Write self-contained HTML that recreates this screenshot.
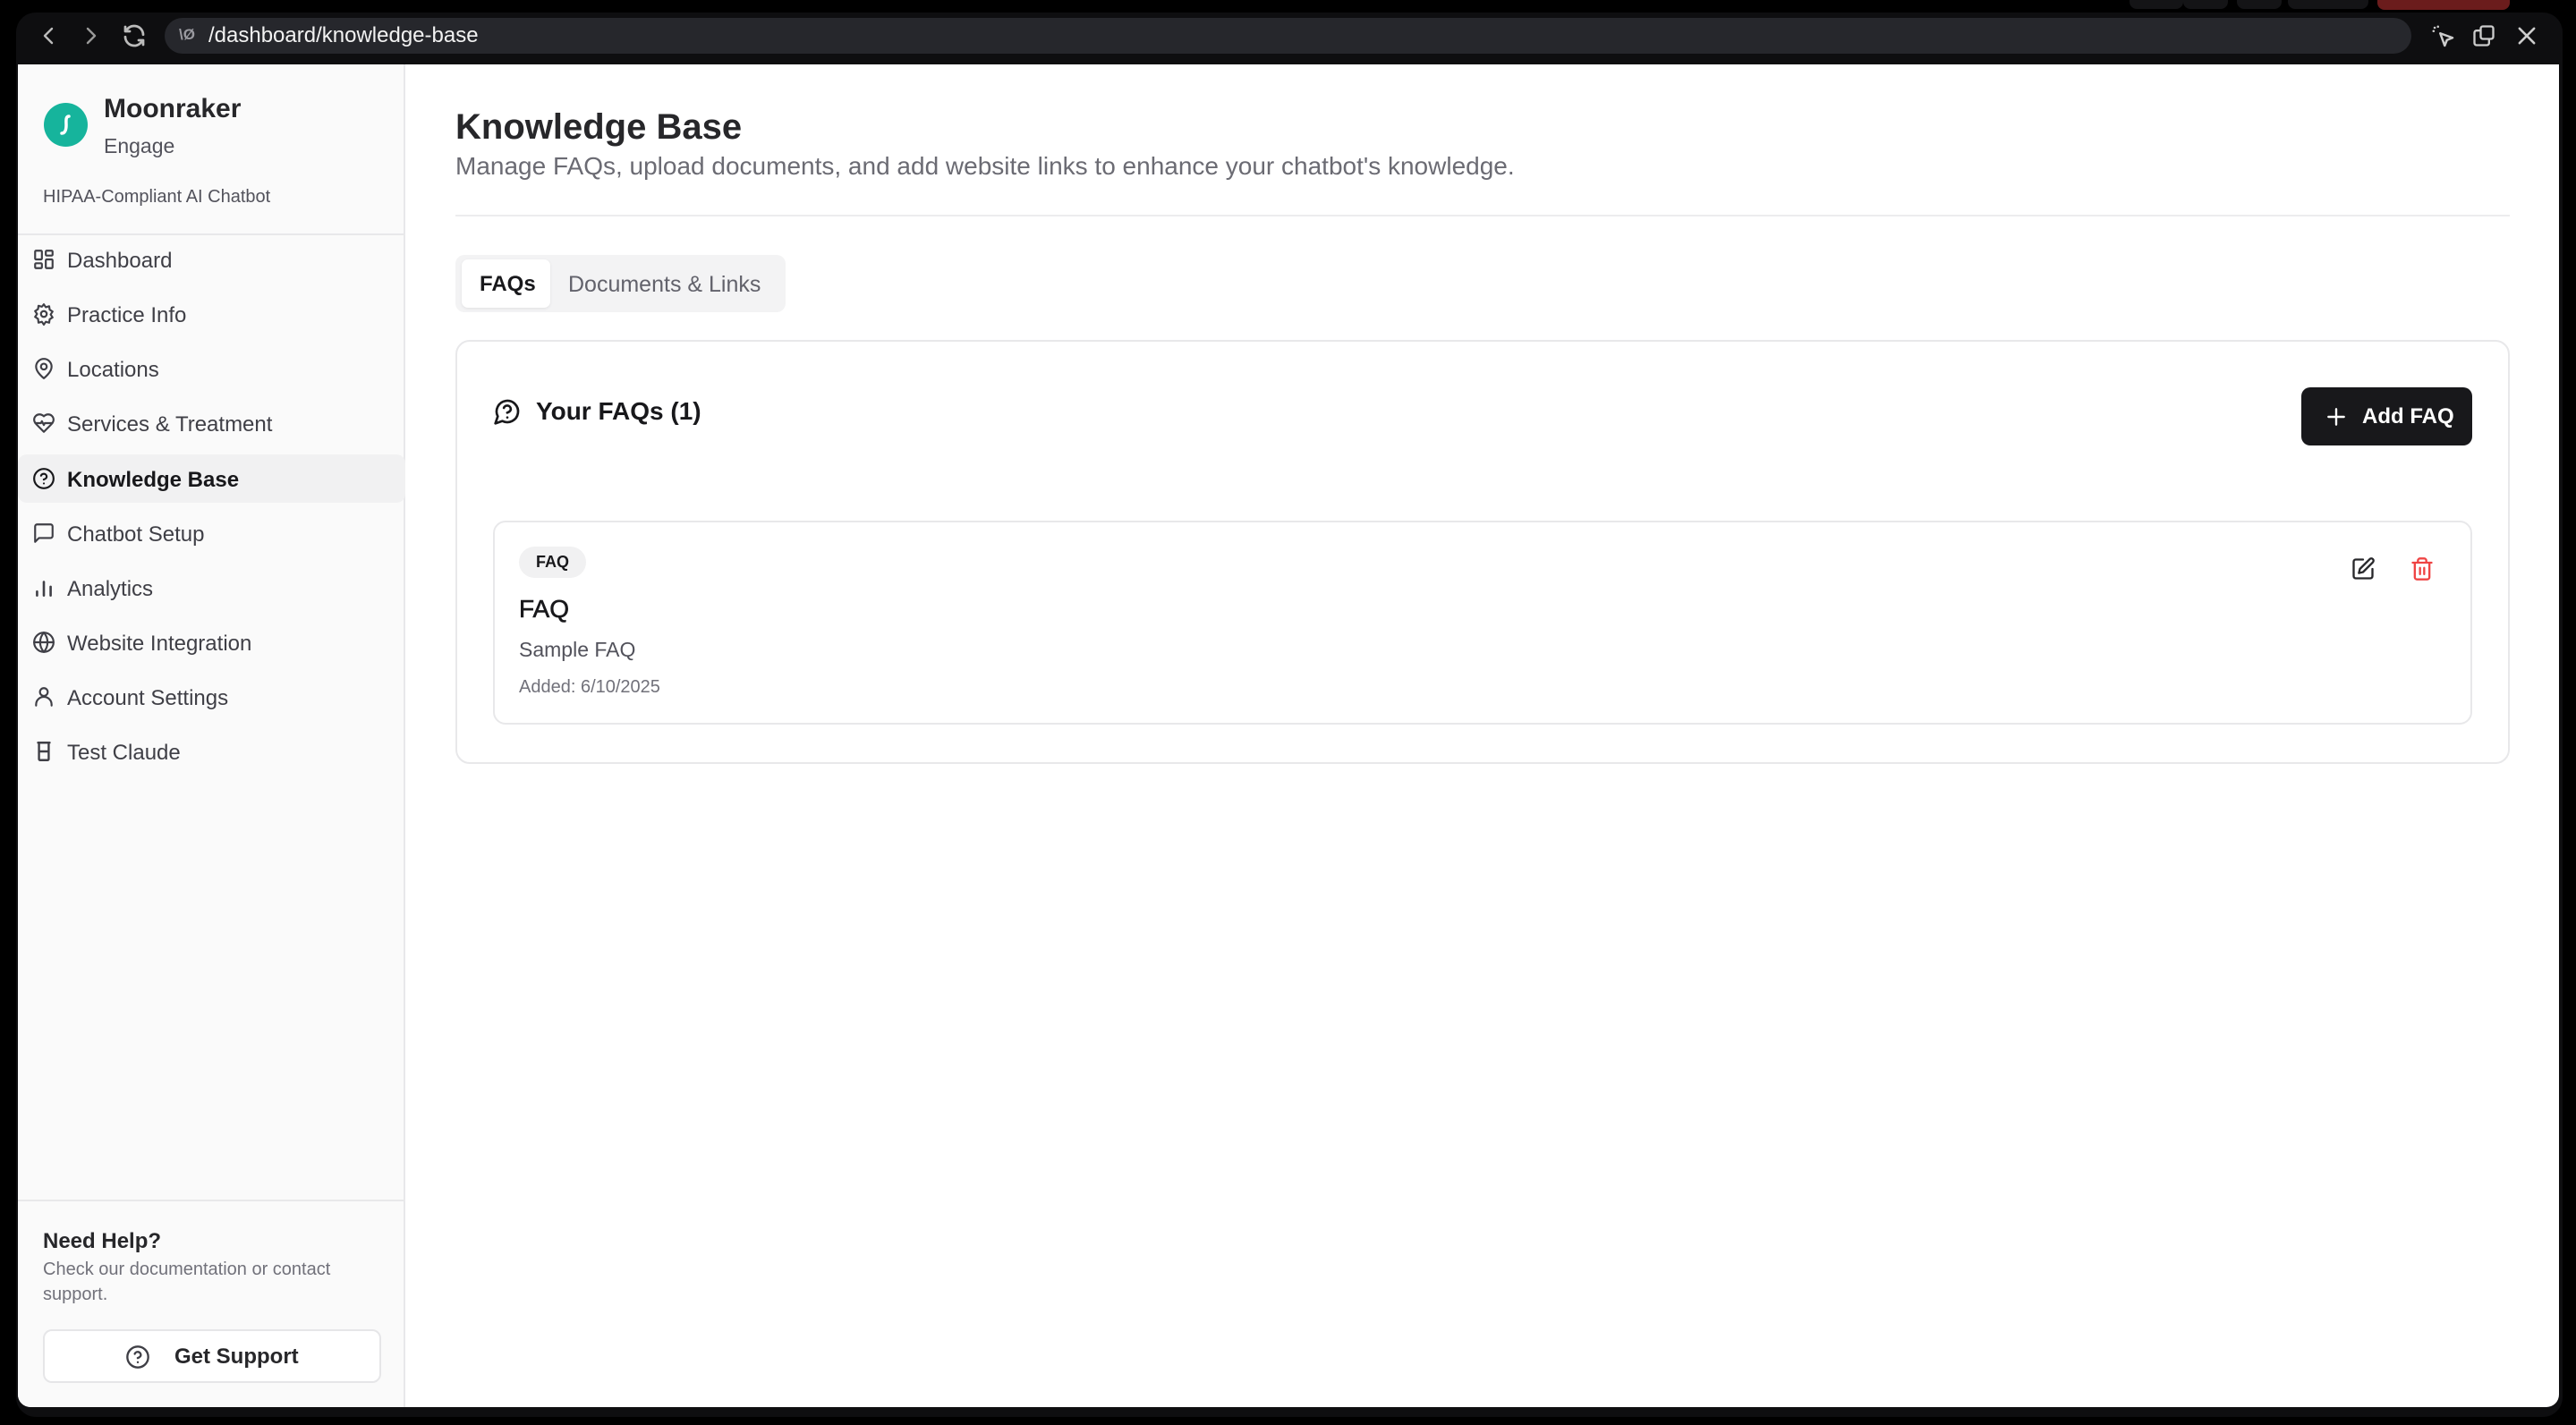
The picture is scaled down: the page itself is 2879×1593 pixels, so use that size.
<!DOCTYPE html>
<html><head><meta charset="utf-8"><style>
*{box-sizing:border-box;margin:0;padding:0}
body{width:2879px;height:1593px;background:#000;font-family:"Liberation Sans",sans-serif;position:relative;overflow:hidden}
.a{position:absolute;white-space:nowrap}
.win{position:absolute;left:18px;top:14px;width:2846px;height:1570px;background:#0e0e10;border-radius:22px}
.url{position:absolute;left:184px;top:20px;width:2511px;height:40px;background:#26272c;border-radius:20px}
.content{position:absolute;left:20px;top:72px;width:2840px;height:1501px;background:#fff;border-radius:0 0 14px 14px;overflow:hidden}
.side{position:absolute;left:0;top:0;width:433px;height:1501px;background:#fafafa;border-right:2px solid #e8e8ea}
.nav{position:absolute;left:0;width:433px;height:54px;display:flex;align-items:center;font-size:24px;color:#3f3f46}
.nav svg{position:absolute;left:16px;width:26px;height:26px}
.nav span{position:absolute;left:55px;top:15px}
svg{fill:none;stroke-linecap:round;stroke-linejoin:round}
</style></head><body>
<div class="a" style="left:2380px;top:0;width:60px;height:10px;background:#141416;border-radius:0 0 8px 8px"></div>
<div class="a" style="left:2440px;top:0;width:50px;height:10px;background:#141416;border-radius:0 0 8px 8px"></div>
<div class="a" style="left:2500px;top:0;width:50px;height:10px;background:#141416;border-radius:0 0 8px 8px"></div>
<div class="a" style="left:2557px;top:0;width:90px;height:10px;background:#141416;border-radius:0 0 8px 8px"></div>
<div class="a" style="left:2657px;top:0;width:148px;height:11px;background:#6b1c1c;border-radius:0 0 8px 8px"></div>
<div class="win"></div>
<svg class="a" style="left:44px;top:28px" width="22" height="24" viewBox="0 0 22 24" stroke="#bbb" stroke-width="2.4"><path d="M14 4 6 12l8 8"/></svg>
<svg class="a" style="left:90px;top:28px" width="22" height="24" viewBox="0 0 22 24" stroke="#999" stroke-width="2.4"><path d="M8 4l8 8-8 8"/></svg>
<svg class="a" style="left:135px;top:25px" width="30" height="30" viewBox="0 0 24 24" stroke="#bbb" stroke-width="2.2"><path d="M20 11a8 8 0 0 0-14.5-4.5M4 4v4h4M4 13a8 8 0 0 0 14.5 4.5M20 20v-4h-4"/></svg>
<div class="url"></div>
<div class="a" style="left:200px;top:29px;font-size:17px;color:#9a9aa0;font-weight:bold">\Ø</div>
<div class="a" style="left:233px;top:26px;font-size:24px;color:#f2f2f2">/dashboard/knowledge-base</div>
<svg class="a" style="left:2716px;top:26px" width="30" height="30" viewBox="0 0 24 24" stroke="#ccc" stroke-width="2"><path d="M9 9l4 11 2-5 5-2z"/><path d="M4 4h.1M7 3v.1M3 7h.1"/></svg>
<svg class="a" style="left:2762px;top:26px" width="28" height="28" viewBox="0 0 24 24" stroke="#ccc" stroke-width="2"><rect x="3" y="7" width="14" height="14" rx="2"/><rect x="9" y="3" width="12" height="12" rx="2" fill="#0e0e10"/></svg>
<svg class="a" style="left:2810px;top:26px" width="28" height="28" viewBox="0 0 24 24" stroke="#ccc" stroke-width="2.2"><path d="M5 5l14 14M19 5 5 19"/></svg>

<div class="content">
<div class="side">
  <div class="a" style="left:29px;top:43px;width:49px;height:49px;border-radius:50%;background:#16b49c"></div>
  <svg class="a" style="left:40px;top:53px" width="28" height="30" viewBox="0 0 28 30" stroke="#fff" stroke-width="3.5"><path d="M17 5c-4 0-3 6-3 10s-1 9-5 9"/></svg>
  <div class="a" style="left:96px;top:33px;font-size:30px;font-weight:bold;color:#27272a">Moonraker</div>
  <div class="a" style="left:96px;top:78px;font-size:23px;color:#52525b">Engage</div>
  <div class="a" style="left:28px;top:137px;font-size:20px;color:#52525b">HIPAA-Compliant AI Chatbot</div>
  <div class="a" style="left:0;top:189px;width:433px;height:2px;background:#e8e8ea"></div>

  <div class="nav" style="top:191px"><svg viewBox="0 0 24 24" stroke="#3f3f46" stroke-width="2"><rect x="3" y="3" width="7" height="9" rx="1"/><rect x="14" y="3" width="7" height="5" rx="1"/><rect x="14" y="12" width="7" height="9" rx="1"/><rect x="3" y="16" width="7" height="5" rx="1"/></svg><span>Dashboard</span></div>
  <div class="nav" style="top:252px"><svg viewBox="0 0 24 24" stroke="#3f3f46" stroke-width="2"><circle cx="12" cy="12" r="3"/><path d="M12 2l2 3 3.5-1 .5 3.5 3 2-2 3 2 3-3 2-.5 3.5-3.5-1-2 3-2-3-3.5 1L6 17l-3-2 2-3-2-3 3-2 .5-3.5 3.5 1z"/></svg><span>Practice Info</span></div>
  <div class="nav" style="top:313px"><svg viewBox="0 0 24 24" stroke="#3f3f46" stroke-width="2"><path d="M20 10c0 6-8 12-8 12s-8-6-8-12a8 8 0 0 1 16 0z"/><circle cx="12" cy="10" r="3"/></svg><span>Locations</span></div>
  <div class="nav" style="top:374px"><svg viewBox="0 0 24 24" stroke="#3f3f46" stroke-width="2"><path d="M19 14c1.5-1.5 3-3.2 3-5.5A5.5 5.5 0 0 0 16.5 3c-1.8 0-3 .5-4.5 2-1.5-1.5-2.7-2-4.5-2A5.5 5.5 0 0 0 2 8.5c0 2.3 1.5 4 3 5.5l7 7z"/><path d="M3.2 12H9l1-2 2 4 1-2h7.8"/></svg><span>Services &amp; Treatment</span></div>
  <div class="nav" style="top:436px;background:#f1f1f2;border-radius:10px;color:#18181b;font-weight:bold"><svg viewBox="0 0 24 24" stroke="#18181b" stroke-width="2"><circle cx="12" cy="12" r="10"/><path d="M9.1 9a3 3 0 0 1 5.8 1c0 2-3 3-3 3M12 17h.01"/></svg><span>Knowledge Base</span></div>
  <div class="nav" style="top:497px"><svg viewBox="0 0 24 24" stroke="#3f3f46" stroke-width="2"><path d="M21 15a2 2 0 0 1-2 2H7l-4 4V5a2 2 0 0 1 2-2h14a2 2 0 0 1 2 2z"/></svg><span>Chatbot Setup</span></div>
  <div class="nav" style="top:558px"><svg viewBox="0 0 24 24" stroke="#3f3f46" stroke-width="2.4"><path d="M5 20v-4M12 20V6M19 20v-9"/></svg><span>Analytics</span></div>
  <div class="nav" style="top:619px"><svg viewBox="0 0 24 24" stroke="#3f3f46" stroke-width="2"><circle cx="12" cy="12" r="10"/><path d="M2 12h20M12 2a15 15 0 0 1 0 20M12 2a15 15 0 0 0 0 20"/></svg><span>Website Integration</span></div>
  <div class="nav" style="top:680px"><svg viewBox="0 0 24 24" stroke="#3f3f46" stroke-width="2"><circle cx="12" cy="7" r="4"/><path d="M4 21v-1a7 7 0 0 1 16 0v1"/></svg><span>Account Settings</span></div>
  <div class="nav" style="top:741px"><svg viewBox="0 0 24 24" stroke="#3f3f46" stroke-width="2.2"><path d="M6 3h12M7 3v17a1 1 0 0 0 1 1h8a1 1 0 0 0 1-1V3M7 12h10"/></svg><span>Test Claude</span></div>

  <div class="a" style="left:0;top:1269px;width:433px;height:2px;background:#e8e8ea"></div>
  <div class="a" style="left:28px;top:1302px;font-size:24px;font-weight:bold;color:#27272a">Need Help?</div>
  <div class="a" style="left:28px;top:1333px;font-size:20px;color:#71717a;line-height:28px">Check our documentation or contact<br>support.</div>
  <div class="a" style="left:28px;top:1414px;width:378px;height:60px;background:#fff;border:2px solid #e6e6e8;border-radius:10px"></div>
  <svg class="a" style="left:120px;top:1431px" width="28" height="28" viewBox="0 0 24 24" stroke="#3f3f46" stroke-width="2"><circle cx="12" cy="12" r="10"/><path d="M9.1 9a3 3 0 0 1 5.8 1c0 2-3 3-3 3M12 17h.01"/></svg>
  <div class="a" style="left:175px;top:1431px;font-size:24px;font-weight:bold;color:#27272a">Get Support</div>
</div>

<div class="a" style="left:489px;top:48px;font-size:40px;font-weight:bold;color:#27272a">Knowledge Base</div>
<div class="a" style="left:489px;top:98px;font-size:28px;color:#6b6b73">Manage FAQs, upload documents, and add website links to enhance your chatbot's knowledge.</div>
<div class="a" style="left:489px;top:168px;width:2296px;height:2px;background:#ececee"></div>

<div class="a" style="left:489px;top:213px;width:369px;height:64px;background:#f3f3f4;border-radius:10px"></div>
<div class="a" style="left:496px;top:218px;width:99px;height:54px;background:#fff;border-radius:7px;box-shadow:0 1px 3px rgba(0,0,0,.08)"></div>
<div class="a" style="left:516px;top:232px;font-size:24px;font-weight:bold;color:#18181b">FAQs</div>
<div class="a" style="left:615px;top:232px;font-size:25px;color:#62626b">Documents &amp; Links</div>

<div class="a" style="left:489px;top:308px;width:2296px;height:474px;border:2px solid #e8e8ea;border-radius:16px;background:#fff"></div>
<svg class="a" style="left:531px;top:372px" width="32" height="32" viewBox="0 0 24 24" stroke="#18181b" stroke-width="2"><path d="M7.9 20A9 9 0 1 0 4 16.1L2 22z"/><path d="M9.1 9a3 3 0 0 1 5.8 1c0 2-3 3-3 3M12 17h.01"/></svg>
<div class="a" style="left:579px;top:372px;font-size:28px;font-weight:bold;color:#18181b">Your FAQs (1)</div>
<div class="a" style="left:2552px;top:361px;width:191px;height:65px;background:#18181b;border-radius:10px"></div>
<svg class="a" style="left:2578px;top:381px" width="26" height="26" viewBox="0 0 24 24" stroke="#fff" stroke-width="2.2"><path d="M12 4v16M4 12h16"/></svg>
<div class="a" style="left:2620px;top:380px;font-size:24px;font-weight:bold;color:#fff">Add FAQ</div>

<div class="a" style="left:531px;top:510px;width:2212px;height:228px;border:2px solid #e8e8ea;border-radius:14px"></div>
<div class="a" style="left:560px;top:539px;width:75px;height:35px;background:#f1f1f2;border-radius:18px;font-size:18px;font-weight:bold;color:#18181b;text-align:center;line-height:35px">FAQ</div>
<div class="a" style="left:560px;top:593px;font-size:28px;color:#18181b;-webkit-text-stroke:0.6px #18181b">FAQ</div>
<div class="a" style="left:560px;top:641px;font-size:23px;color:#52525b">Sample FAQ</div>
<div class="a" style="left:560px;top:685px;font-size:20px;color:#71717a">Added: 6/10/2025</div>
<svg class="a" style="left:2607px;top:550px" width="28" height="28" viewBox="0 0 24 24" stroke="#27272a" stroke-width="2"><path d="M12 3H5a2 2 0 0 0-2 2v14a2 2 0 0 0 2 2h14a2 2 0 0 0 2-2v-7"/><path d="M18.4 2.6a2.1 2.1 0 0 1 3 3L12 15l-4 1 1-4z"/></svg>
<svg class="a" style="left:2673px;top:550px" width="28" height="28" viewBox="0 0 24 24" stroke="#ef4444" stroke-width="2"><path d="M3 6h18M19 6v14a2 2 0 0 1-2 2H7a2 2 0 0 1-2-2V6M8 6V4a2 2 0 0 1 2-2h4a2 2 0 0 1 2 2v2M10 11v6M14 11v6"/></svg>
</div>
</body></html>
